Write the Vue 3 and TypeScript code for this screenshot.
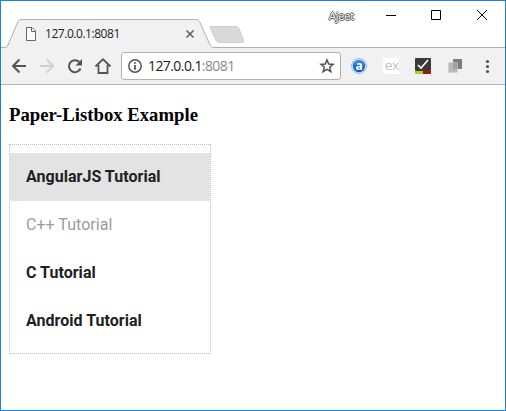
<script setup lang="ts">
interface ListItem {
  label: string
  selected?: boolean
  disabled?: boolean
}

const items: ListItem[] = [
  { label: 'AngularJS Tutorial', selected: true },
  { label: 'C++ Tutorial', disabled: true },
  { label: 'C Tutorial' },
  { label: 'Android Tutorial' },
]
</script>

<template>
  <div class="window">
    <header class="titlebar">
      <svg class="tab-shape" width="504" height="47" viewBox="1 1 504 47">
        <path d="M1 48V47.500H5Q7 47.500 8 45L18 21.500Q19 19.500 21 19.500H196Q198.500 19.500 199.500 21.500L210 45Q211.500 47.500 213 47.500H505V48Z" fill="#f1f1f1" />
        <path d="M1 47.500H5Q7 47.500 8 45L18 21.500Q19 19.500 21 19.500H196Q198.500 19.500 199.500 21.500L210 45Q211.500 47.500 213 47.500H505" fill="none" stroke="#b0b0b0" />
        <path d="M211 26.500H236Q238 26.500 239 28.500L243.500 40Q244.500 42.500 242 42.500H219Q217 42.500 216 40.500L210.500 28.500Q209.500 26.500 211 26.500Z" fill="#d9d9d9" stroke="#cdcdcd" />
      </svg>
      <div class="tab">
        <svg width="12" height="14" viewBox="0 0 12 14">
          <path d="M1.500 .5H7L10.500 4V13.500H1.500Z" fill="#fafafa" stroke="#666" />
          <path d="M6.500 .5V4.500H10.500" fill="none" stroke="#666" />
        </svg>
        <span class="tab-title">127.0.0.1:8081</span>
        <svg width="10" height="10" viewBox="0 0 10 10">
          <path d="M1.500 1.500L8.500 8.500M8.500 1.500L1.500 8.500" stroke="#5a5a5a" stroke-width="1.500" />
        </svg>
      </div>
      <div class="controls">
        <span class="user">Ajeet</span>
        <svg width="102" height="12" viewBox="386 9 102 12" fill="none" stroke="#000">
          <path d="M386 15.500H396M431.500 10.500H440.500V19.500H431.500ZM477 10L487 20M487 10L477 20" />
        </svg>
      </div>
    </header>
    <nav class="toolbar">
      <svg class="nav-icons" width="103" height="20" viewBox="10 56 103 20" fill="none" stroke="#555" stroke-width="2">
        <path d="M26 66H13.500M19.500 59.500L13 66L19.500 72.500" />
        <path d="M40 66H52.500M46.500 59.500L53 66L46.500 72.500" stroke="#d0d0d0" />
        <path d="M79.300 62A6 6 0 1 0 80.500 68.500" />
        <path d="M82 59V65.500H75.500Z" fill="#555" stroke="none" />
        <path d="M95.500 66.500L103 59.300L110.500 66.500M98.500 65V73H107.500V65" stroke-width="1.800" />
      </svg>
      <div class="address">
        <svg width="16" height="16" viewBox="0 0 16 16">
          <circle cx="8" cy="8" r="6.200" fill="none" stroke="#555" stroke-width="1.500" />
          <path d="M8 4.200V5.800M8 7V11.800" stroke="#555" stroke-width="1.800" />
        </svg>
        <span class="url">127.0.0.1<span class="port">:8081</span></span>
        <svg width="16" height="16" viewBox="0 0 16 16">
          <path d="M8 2L9.700 6.100L14 6.400L10.700 9.300L11.800 13.600L8 11.300L4.200 13.600L5.300 9.300L2 6.400L6.300 6.100Z" fill="none" stroke="#505050" stroke-width="1.500" />
        </svg>
      </div>
      <svg class="ext" width="142" height="18" viewBox="350 57 142 18">
        <defs>
          <linearGradient id="blue" x1="0" y1="0" x2="0" y2="1">
            <stop offset="0" stop-color="#3f8fe4" />
            <stop offset="1" stop-color="#0650b8" />
          </linearGradient>
        </defs>
        <circle cx="359" cy="66" r="7.400" fill="#f2f8fd" stroke="#74addd" stroke-width=".9" />
        <circle cx="359" cy="66" r="6.200" fill="url(#blue)" />
        <text class="badge-a" x="359" y="69.500" text-anchor="middle">a</text>
        <rect x="383" y="58" width="16" height="16" fill="#fff" />
        <text class="badge-ex" x="385" y="70" textLength="14" lengthAdjust="spacingAndGlyphs">ex</text>
        <rect x="415" y="58" width="16" height="13" rx="1" fill="#3a3a3a" />
        <path d="M415 71H423V74H416Q415 74 415 73Z" fill="#a6d21c" />
        <path d="M423 71H431V73Q431 74 430 74H423Z" fill="#b80d14" />
        <path d="M418 65L421 68L428 60" fill="none" stroke="#fff" stroke-width="1.600" />
        <rect x="453" y="59" width="9" height="10" rx="1" fill="#7c7c7c" />
        <rect x="448.500" y="62.500" width="9" height="10" rx="1" fill="#b9b9b9" stroke="#cfcfcf" stroke-width=".7" />
        <rect x="453" y="62.500" width="4.500" height="6.500" fill="#a0a0a0" />
        <g fill="#555">
          <circle cx="487.500" cy="61.500" r="1.600" />
          <circle cx="487.500" cy="66.500" r="1.600" />
          <circle cx="487.500" cy="71.500" r="1.600" />
        </g>
      </svg>
    </nav>
    <main class="page">
      <h3 class="heading">Paper-Listbox Example</h3>
      <div class="listbox" role="listbox">
        <div
          v-for="item in items"
          :key="item.label"
          class="item"
          :class="{ selected: item.selected, disabled: item.disabled }"
          role="option"
        >{{ item.label }}</div>
      </div>
    </main>
  </div>
</template>

<style>
body {
  background: #fff;
}
</style>

<style scoped>
.window {
  box-sizing: border-box;
  width: 506px;
  height: 411px;
  border: 1px solid #1883d7;
  background: #fff;
  overflow: hidden;
}
svg {
  display: block;
  flex: none;
}
.titlebar {
  display: grid;
  grid-template-columns: 212px 1fr;
  height: 47px;
}
.tab-shape {
  grid-area: 1 / 1 / 2 / 3;
}
.tab {
  grid-area: 1 / 1;
  display: flex;
  align-items: center;
  padding: 19px 18px 0 24px;
  height: 28px;
}
.tab-title {
  flex: 1;
  margin-left: 8px;
  font: 12px/16px "Open Sans", sans-serif;
  letter-spacing: -0.46px;
  color: #222;
}
.controls {
  grid-area: 1 / 2;
  display: flex;
  justify-content: flex-end;
  align-items: center;
  height: 28px;
  padding-right: 17px;
}
.user {
  margin: 2px 32px 0 0;
  font: 11px/14px "Open Sans", sans-serif;
  letter-spacing: -0.2px;
  color: #fff;
  text-shadow: 1px 0 #555, -1px 0 #555, 0 1px #555, 0 -1px #555;
}
.toolbar {
  display: flex;
  align-items: center;
  box-sizing: border-box;
  height: 37px;
  padding-left: 9px;
  background: #f1f1f1;
  border-bottom: 1px solid #b5b5b5;
}
.address {
  display: flex;
  align-items: center;
  box-sizing: border-box;
  width: 220px;
  height: 28px;
  margin-left: 8px;
  padding: 0 5px;
  border: 1px solid #b0b0b0;
  border-radius: 3px;
  background: #fff;
}
.url {
  flex: 1;
  margin-left: 5px;
  font: 14px/20px "Open Sans", sans-serif;
  letter-spacing: -0.58px;
  color: #222;
}
.port {
  color: #888;
}
.ext {
  margin-left: 9px;
}
.badge-a {
  font: bold 12px "Noto Sans", sans-serif;
  fill: #fff;
}
.badge-ex {
  font: 300 13px "Open Sans", sans-serif;
  fill: #999;
}
.page {
  padding: 19px 8px 0;
}
.heading {
  margin: 0;
  font: bold 18.72px/21px "Liberation Serif", serif;
  color: #000;
}
.listbox {
  box-sizing: border-box;
  width: 202px;
  margin-top: 19px;
  padding: 8px 0;
  border: 1px dotted #bdbdbd;
  font: 16px/48px Roboto, sans-serif;
}
.item {
  height: 48px;
  padding: 0 16px;
  font-weight: 700;
  letter-spacing: 0.03px;
  color: #212121;
}
.selected {
  background: #e3e3e3;
}
.disabled {
  font-weight: 400;
  color: #9b9b9b;
}
</style>
